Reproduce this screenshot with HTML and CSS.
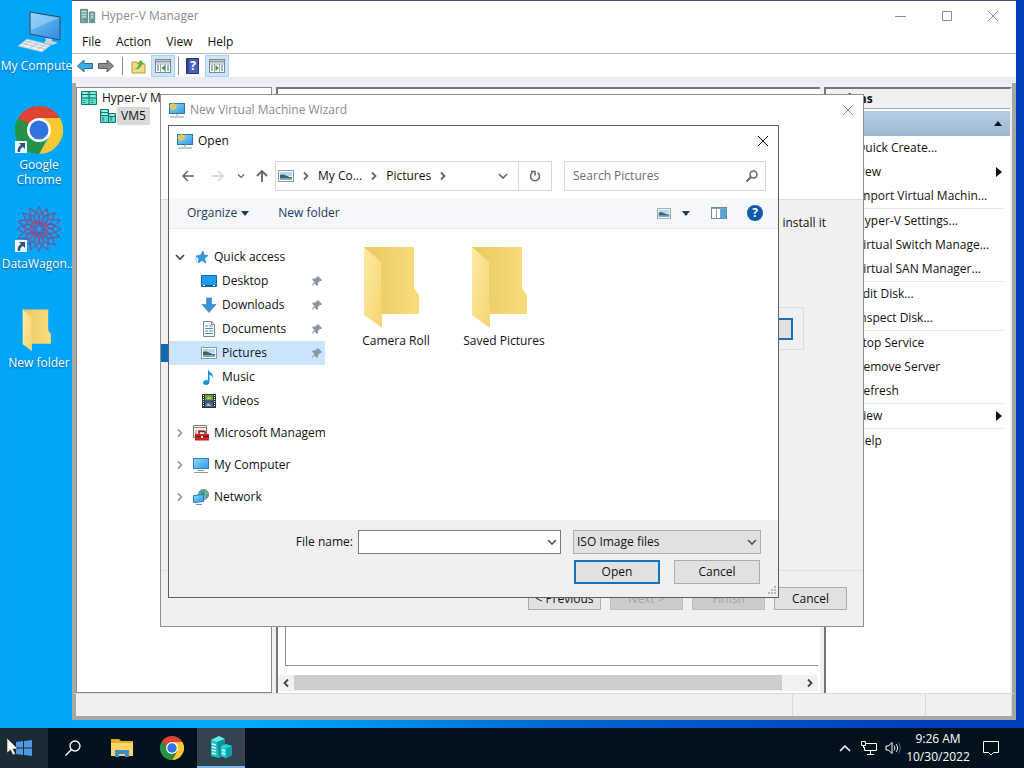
FILE: index.html
```html
<!DOCTYPE html>
<html lang="en">
<head>
    <meta charset="UTF-8">
    <meta name="viewport" content="width=device-width, initial-scale=1.0">
    <title>Hyper-V Manager</title>
    <link rel="stylesheet" href="styles.css">
</head>
<body>
    <!-- Shared icons -->
    <svg class="sprite" aria-hidden="true">
        <defs>
            <linearGradient id="screen-fill" x1="0" y1="0" x2="1" y2="1">
                <stop offset="0" stop-color="#8fd8fb"/>
                <stop offset="1" stop-color="#2e9be6"/>
            </linearGradient>
            <linearGradient id="desk-fill" x1="0" y1="0" x2="1" y2="1">
                <stop offset="0" stop-color="#7cc6f5"/>
                <stop offset="1" stop-color="#2a8be0"/>
            </linearGradient>
            <linearGradient id="folder-back" x1="0" y1="0" x2="1" y2="0">
                <stop offset="0" stop-color="#e9c95e"/>
                <stop offset="1" stop-color="#fbdb7d"/>
            </linearGradient>
            <linearGradient id="folder-front" x1="0" y1="0" x2="1" y2="1">
                <stop offset="0" stop-color="#ffeaa4"/>
                <stop offset="1" stop-color="#f5d572"/>
            </linearGradient>
        </defs>
        <symbol id="i-close" viewBox="0 0 12 12"><path d="M1 1l10 10M11 1L1 11" fill="none" stroke="currentColor"/></symbol>
        <symbol id="i-right" viewBox="0 0 8 10"><path d="M2 1.5L5.5 5 2 8.5" fill="none" stroke="currentColor" stroke-width="1.8"/></symbol>
        <symbol id="i-left" viewBox="0 0 8 10"><path d="M6 1.5L2.5 5 6 8.5" fill="none" stroke="currentColor" stroke-width="1.8"/></symbol>
        <symbol id="i-down" viewBox="0 0 10 8"><path d="M1 2l4 4 4-4" fill="none" stroke="currentColor" stroke-width="1.6"/></symbol>
        <symbol id="i-tri" viewBox="0 0 8 5"><path d="M0 0h8L4 5z" fill="currentColor"/></symbol>
        <symbol id="i-tri-right" viewBox="0 0 6 10"><path d="M0 0l6 5-6 5z" fill="currentColor"/></symbol>
        <symbol id="i-folder" viewBox="0 0 58 82">
            <path d="M1 1h50v41l5 7v19H18z" fill="url(#folder-back)"/>
            <path d="M1 1l17 15v42l1 2v22L1 69z" fill="url(#folder-front)"/>
        </symbol>
        <symbol id="i-wizard" viewBox="0 0 16 16">
            <rect x=".5" y="1.5" width="15" height="10" fill="url(#screen-fill)" stroke="#2879b0"/>
            <path d="M8 12v2M1 15h14" stroke="#8b969c"/>
            <circle cx="4.5" cy="4.5" r="3" fill="#f4d24f"/>
            <path d="M4.5 0v9M0 4.5h9M1.5 1.5l6 6M7.5 1.5l-6 6" stroke="#d7c45c" stroke-width=".7"/>
        </symbol>
        <symbol id="i-picture" viewBox="0 0 16 12">
            <rect x=".5" y=".5" width="15" height="11" fill="#fff" stroke="#8a9aa5"/>
            <path d="M2 2h12v4H2z" fill="#b5d8ee"/>
            <path d="M2 5c3-1 5 0 7 1s4 1 5 1v2H2z" fill="#3e6473"/>
            <path d="M2 8h12v2H2z" fill="#7fa9b9"/>
        </symbol>
        <symbol id="i-chrome" viewBox="0 0 48 48">
            <path d="M24 24V12h20.8A24 24 0 0 1 24 48l10.4-18z" fill="#fcc934"/>
            <path d="M24 48A24 24 0 0 1 3.2 12l10.4 18L24 36l7-2z" fill="#249346"/>
            <path d="M3.2 12A24 24 0 0 1 44.8 12H24L13.6 30z" fill="#df4334"/>
            <path d="M3.2 12l10.4 18 7-8z" fill="#249346"/>
            <circle cx="24" cy="24" r="12" fill="#fff"/>
            <circle cx="24" cy="24" r="9.5" fill="#3373df"/>
        </symbol>
        <symbol id="i-shortcut" viewBox="0 0 12 12">
            <rect width="12" height="12" fill="#eef5fb"/>
            <path d="M4 2h6v6L8 6c-2 1-3 2-3 5H3c-1-3 0-5 3-7z" fill="#2d5488"/>
        </symbol>
        <symbol id="i-server" viewBox="0 0 16 16">
            <path d="M.5 1.5h8v13h-8zM8.5 5.5h7v9h-7z" fill="#5fdccd" stroke="#16766e"/>
            <path d="M1 4.5h7M1 7.5h7M9 8.5h6" stroke="#16766e"/>
            <path d="M2 3h5M2 6h5M10 7h4" stroke="#d4fff9"/>
            <path d="M2 10h2M2 12h2M10 10h2M10 12h2" stroke="#16766e"/>
        </symbol>
        <symbol id="i-rack" viewBox="0 0 16 16">
            <path d="M.5 1.5h15v13H.5z" fill="#5fdccd" stroke="#16766e"/>
            <path d="M8 1v14M1 4.5h14M1 8h14" stroke="#16766e"/>
            <path d="M2 3h4M10 3h4M2 6h4M10 6h4" stroke="#c8fff7"/>
            <path d="M2 10.500h2M10 10.500h2M2 12.500h2M10 12.500h2" stroke="#2b8f87"/>
        </symbol>
        <symbol id="i-pin" viewBox="0 0 12 12"><path d="M7 1l4 4-1 1-1 0-2 2 0 2-1 1-2.500-2.500L1 11l0-1 2.500-3L1 4.500l1-1h2l2.500-2z" fill="#8b98a3"/></symbol>
        <symbol id="i-panel" viewBox="0 0 16 14">
            <rect x=".5" y=".5" width="15" height="13" fill="#fff" stroke="#7b8793"/>
            <path d="M1 2.500h14" stroke="#8a97a3" stroke-width="2"/>
            <path d="M1 5h14M5.500 5v8M10.500 5v8" stroke="#9aa6b0"/>
            <path d="M2 7h2M2 9h2M2 11h2M12 7h2M12 9h2M12 11h2" stroke="#44617d"/>
        </symbol>
    </svg>

    <main class="desktop">
        <div class="desktop-icons">
            <button class="shortcut">
                <svg class="shortcut-icon" viewBox="0 0 48 48">
                    <path d="M15 5l30 5v23l-30-6z" fill="url(#desk-fill)" stroke="#2c4e6b"/>
                    <path d="M16 6l28 5-28 12z" fill="#c4e8fb" opacity=".4"/>
                    <path d="M30 31l7 1v2l6 2-6 2-8-2 2-3z" fill="#c7d5df"/>
                    <path d="M12 32l24 6-9 7-24-6z" fill="#e9eff3" stroke="#a3b4c0" stroke-width=".7"/>
                    <path d="M10 34l23 6M7 36l23 6M17 33l-9 6M24 35l-9 6M31 37l-9 6" stroke="#a8b7c2" stroke-width=".7"/>
                </svg>
                <span>My Computer</span>
            </button>
            <button class="shortcut">
                <svg class="shortcut-icon" viewBox="0 0 48 48">
                    <use href="#i-chrome"/>
                    <use href="#i-shortcut" y="35" width="12" height="12"/>
                </svg>
                <span>Google<br>Chrome</span>
            </button>
            <button class="shortcut">
                <svg class="shortcut-icon" viewBox="0 0 48 48">
                    <g fill="none" stroke="#6a5c9e" stroke-width="1.3">
                        <g id="petals">
                            <path d="M24 2l5 10-5 9-5-9zM24 46l5-10-5-9-5 9zM2 24l10-5 9 5-9 5zM46 24l-10-5-9 5 9 5z"/>
                            <path d="M8 8l11 3 3 10-10-3zM40 8l-11 3-3 10 10-3zM8 40l11-3 3-10-10 3zM40 40l-11-3-3-10 10 3z"/>
                        </g>
                        <use href="#petals" transform="rotate(22 24 24)"/>
                        <circle cx="24" cy="24" r="14" stroke="#8d558f" stroke-dasharray="3 2"/>
                        <circle cx="24" cy="24" r="8" stroke="#b04a72" stroke-width="2" stroke-dasharray="3 2"/>
                    </g>
                    <use href="#i-shortcut" y="35" width="12" height="12"/>
                </svg>
                <span>DataWagon...</span>
            </button>
            <button class="shortcut">
                <svg class="shortcut-icon" viewBox="0 0 48 48"><use href="#i-folder" x="6" y="5" width="32" height="42"/></svg>
                <span>New folder</span>
            </button>
        </div>

        <!-- Hyper-V Manager -->
        <section class="window manager">
            <header class="titlebar">
                <svg width="16" height="16" viewBox="0 0 18 16">
                    <path d="M.5.500h8v15h-8z" fill="#7fa9a4" stroke="#54807b"/>
                    <path d="M10.500 3.500h6v12h-6z" fill="#7fa9a4" stroke="#54807b"/>
                    <path d="M2 3h5M2 6h5M2 9h5M12 6h3M12 9h3" stroke="#dff3f0"/>
                    <path d="M5 12h2M13 13h2" stroke="#3f7c4b" stroke-width="2"/>
                </svg>
                <span class="title">Hyper-V Manager</span>
                <div class="window-buttons">
                    <button aria-label="Minimize"><svg width="12" height="12"><path d="M0 6.500h11" stroke="currentColor"/></svg></button>
                    <button aria-label="Maximize"><svg width="12" height="12"><path d="M1.500 1.500h9v9h-9z" fill="none" stroke="currentColor"/></svg></button>
                    <button aria-label="Close"><svg width="12" height="12"><use href="#i-close"/></svg></button>
                </div>
            </header>
            <nav class="menubar">
                <button>File</button>
                <button>Action</button>
                <button>View</button>
                <button>Help</button>
            </nav>
            <div class="toolbar">
                <button aria-label="Back"><svg width="16" height="14" viewBox="0 0 16 14"><path d="M.5 7L7 1v3.500h8.500v5H7V13z" fill="#3fa9e2" stroke="#2c6a97"/></svg></button>
                <button aria-label="Forward"><svg width="16" height="14" viewBox="0 0 16 14"><path d="M15.500 7L9 1v3.500H.5v5H9V13z" fill="#8b8b8b" stroke="#5e5e5e"/></svg></button>
                <span class="divider"></span>
                <button aria-label="Up one level">
                    <svg width="16" height="16" viewBox="0 0 16 16">
                        <path d="M1 4h5l1 2h7v9H1z" fill="#f0dc86" stroke="#b89b47"/>
                        <path d="M3 11c2 0 4-2 5-5l-2 0 4-4 3 4-2 0c-1 4-4 6-8 5z" fill="#56b33b"/>
                    </svg>
                </button>
                <button class="pressed" aria-label="Show console tree"><svg width="16" height="14" viewBox="0 0 16 14"><use href="#i-panel"/><path d="M10 6v6L6.500 9z" fill="#3b9a35"/></svg></button>
                <span class="divider"></span>
                <button aria-label="Help">
                    <svg width="14" height="16" viewBox="0 0 14 16">
                        <path d="M.5.500h12v15H.5z" fill="#4660bb" stroke="#27346f"/>
                        <path d="M2 1v14" stroke="#23306b"/>
                        <text x="7" y="12" class="help-mark">?</text>
                    </svg>
                </button>
                <button class="pressed" aria-label="Show action pane"><svg width="16" height="14" viewBox="0 0 16 14"><use href="#i-panel"/><path d="M6.500 6v6L10 9z" fill="#3b9a35"/></svg></button>
            </div>
            <div class="panes">
                <div class="pane tree">
                    <div class="tree-row"><svg width="16" height="16"><use href="#i-rack"/></svg><span>Hyper-V Manager</span></div>
                    <div class="tree-row child"><svg width="16" height="16"><use href="#i-server"/></svg><span class="current">VM5</span></div>
                </div>
                <div class="pane details">
                    <div class="details-box"></div>
                    <div class="scrollbar">
                        <button aria-label="Scroll left"><svg width="8" height="10"><use href="#i-left"/></svg></button>
                        <div class="track"><div class="thumb"></div></div>
                        <button aria-label="Scroll right"><svg width="8" height="10"><use href="#i-right"/></svg></button>
                    </div>
                </div>
                <aside class="pane actions">
                    <h2>Actions</h2>
                    <div class="actions-group"><span>VM5</span><svg class="flip" width="10" height="5"><use href="#i-tri"/></svg></div>
                    <button>Quick Create...</button>
                    <button>New<svg width="6" height="10"><use href="#i-tri-right"/></svg></button>
                    <button>Import Virtual Machin...</button>
                    <hr>
                    <button>Hyper-V Settings...</button>
                    <button>Virtual Switch Manage...</button>
                    <button>Virtual SAN Manager...</button>
                    <hr>
                    <button>Edit Disk...</button>
                    <button>Inspect Disk...</button>
                    <hr>
                    <button>Stop Service</button>
                    <button>Remove Server</button>
                    <button>Refresh</button>
                    <hr>
                    <button>View<svg width="6" height="10"><use href="#i-tri-right"/></svg></button>
                    <hr>
                    <button>Help</button>
                </aside>
            </div>
            <footer class="statusbar"><span></span><span></span><span></span></footer>
        </section>

        <!-- New Virtual Machine Wizard -->
        <section class="window wizard">
            <header class="titlebar">
                <svg width="16" height="16"><use href="#i-wizard"/></svg>
                <span class="title">New Virtual Machine Wizard</span>
                <button class="close" aria-label="Close"><svg width="12" height="12"><use href="#i-close"/></svg></button>
            </header>
            <div class="wizard-banner"></div>
            <div class="wizard-body">
                <div class="wizard-steps"><span class="step"></span></div>
                <div class="wizard-page">
                    <p>can install it</p>
                    <div class="group"><button aria-label="Browse"></button></div>
                </div>
            </div>
            <footer class="wizard-footer">
                <button class="btn">&lt; Previous</button>
                <button class="btn" disabled>Next &gt;</button>
                <button class="btn" disabled>Finish</button>
                <button class="btn">Cancel</button>
            </footer>
        </section>

        <!-- File picker -->
        <section class="window picker">
            <header class="titlebar">
                <svg width="16" height="16"><use href="#i-wizard"/></svg>
                <span class="title">Open</span>
                <button class="close" aria-label="Close"><svg width="12" height="12"><use href="#i-close"/></svg></button>
            </header>
            <div class="location">
                <div class="history">
                    <button aria-label="Back"><svg width="14" height="12"><path d="M13 6H2M7 1L2 6l5 5" fill="none" stroke="#666" stroke-width="1.500"/></svg></button>
                    <button aria-label="Forward"><svg width="14" height="12"><path d="M1 6h11M7 1l5 5-5 5" fill="none" stroke="#d3d3d3" stroke-width="1.500"/></svg></button>
                    <button class="recent" aria-label="Recent locations"><svg width="8" height="6"><use href="#i-down"/></svg></button>
                    <button class="up" aria-label="Up"><svg width="12" height="14"><path d="M6 13V2M1 7l5-5 5 5" fill="none" stroke="#666" stroke-width="1.800"/></svg></button>
                </div>
                <div class="address">
                    <svg width="16" height="12"><use href="#i-picture"/></svg>
                    <svg class="crumb-arrow" width="8" height="10"><use href="#i-right"/></svg>
                    <button>My Co...</button>
                    <svg class="crumb-arrow" width="8" height="10"><use href="#i-right"/></svg>
                    <button>Pictures</button>
                    <svg class="crumb-arrow" width="8" height="10"><use href="#i-right"/></svg>
                    <button class="previous" aria-label="Previous locations"><svg width="10" height="8"><use href="#i-down"/></svg></button>
                    <button class="reload" aria-label="Refresh">
                        <svg width="12" height="12"><path d="M8.500 2.500A4.500 4.500 0 1 1 3.500 2.500M2 1.500h4V5.500" fill="none" stroke="currentColor" stroke-width="1.500"/></svg>
                    </button>
                </div>
                <div class="search">
                    <input type="text" placeholder="Search Pictures" aria-label="Search Pictures">
                    <svg width="12" height="12"><circle cx="7.500" cy="4.500" r="3.500" fill="none" stroke="currentColor" stroke-width="1.500"/><path d="M5 7L.5 11.500" stroke="currentColor" stroke-width="2"/></svg>
                </div>
            </div>
            <div class="commands">
                <button>Organize <svg width="8" height="5"><use href="#i-tri"/></svg></button>
                <button>New folder</button>
                <div class="view-tools">
                    <button aria-label="Change view"><svg width="14" height="11"><use href="#i-picture"/></svg></button>
                    <button aria-label="More views"><svg width="8" height="5"><use href="#i-tri"/></svg></button>
                    <button class="preview" aria-label="Preview pane">
                        <svg width="16" height="12"><rect x=".5" y=".5" width="15" height="11" fill="#fff" stroke="#788995"/><path d="M10 1h5v10h-5z" fill="#4ba6e4"/><path d="M5.500 1v10M9.500 1v10M1 1.500h14" stroke="#8aa3b5"/></svg>
                    </button>
                    <button aria-label="Get help"><svg width="16" height="16"><circle cx="8" cy="8" r="8" fill="#0c5cab"/><text x="8" y="12" class="help-mark">?</text></svg></button>
                </div>
            </div>
            <div class="browser">
                <nav class="places">
                    <button class="place root">
                        <svg class="twisty open" width="10" height="8"><use href="#i-down"/></svg>
                        <svg width="16" height="16"><path d="M10 2l1 4 4 .5-3.500 3L13 14l-4-2.500L5 14l1-4.500L3 7l4.500-.8z" fill="#2b9be3" stroke="#2278b4" stroke-width=".6"/><path d="M2 9h3M2 11h2M3 13h1" stroke="#7fc1ec"/></svg>
                        <span>Quick access</span>
                    </button>
                    <button class="place">
                        <svg width="16" height="16"><path d="M.5 2.500h15v11H.5z" fill="#1f9cf0" stroke="#126ba9"/><path d="M1 12.500h14" stroke="#0d5d96"/><path d="M2 12.500h2M12 12.500h2" stroke="#fff"/></svg>
                        <span>Desktop</span><svg class="pin" width="12" height="12"><use href="#i-pin"/></svg>
                    </button>
                    <button class="place">
                        <svg width="16" height="16"><path d="M5.500 1h5v6.500H15L8 15.500 1 7.500h4.500z" fill="#3b92d8" stroke="#2f7bb8" stroke-width=".6"/></svg>
                        <span>Downloads</span><svg class="pin" width="12" height="12"><use href="#i-pin"/></svg>
                    </button>
                    <button class="place">
                        <svg width="16" height="16"><path d="M2.500.5h8l3 3v12h-11z" fill="#fff" stroke="#7c8b95"/><path d="M10.500.5v3h3" fill="none" stroke="#7c8b95"/><path d="M4 5h3M8 5h4M4 7.500h8M4 10h3M8 10h4M4 12.500h8" stroke="#4c92bf"/></svg>
                        <span>Documents</span><svg class="pin" width="12" height="12"><use href="#i-pin"/></svg>
                    </button>
                    <button class="place selected">
                        <svg width="16" height="12"><use href="#i-picture"/></svg>
                        <span>Pictures</span><svg class="pin" width="12" height="12"><use href="#i-pin"/></svg>
                    </button>
                    <button class="place">
                        <svg width="16" height="16"><path d="M7 0c1 4 6 4 5 9-.5-2-2-3-3.500-3v7c0 4-6.500 3.500-6.500 1 0-2.500 3-3.500 5-2.500z" fill="#1795dc"/></svg>
                        <span>Music</span>
                    </button>
                    <button class="place">
                        <svg width="16" height="16"><path d="M1 1h14v14H1z" fill="#30343a"/><path d="M4 2h8v5.500H4z" fill="#6f9d43"/><path d="M4 8.500h8V14H4z" fill="#3d5fc4"/><path d="M5 6l3-3 3 3zM5 13l2-3 4 3z" fill="#b9c84c"/><path d="M2.500 2v12M13.500 2v12" stroke="#fff" stroke-dasharray="1 1"/></svg>
                        <span>Videos</span>
                    </button>
                    <button class="place root">
                        <svg class="twisty" width="8" height="10"><use href="#i-right"/></svg>
                        <svg width="16" height="16"><path d="M.5.5h13v12H.5z" fill="#f2f0e8" stroke="#807d75"/><path d="M1 2.500h12M3 5v6M5 5.500h6" stroke="#8f8c83"/><path d="M2 9h14v6.500H2z" fill="#c9242f"/><path d="M6 9V6.500h6V9" fill="none" stroke="#981a23" stroke-width="1.500"/><path d="M2 11.500h14" stroke="#7b121a"/><path d="M8 11h2v2H8z" fill="#eee"/></svg>
                        <span>Microsoft Management</span>
                    </button>
                    <button class="place root">
                        <svg class="twisty" width="8" height="10"><use href="#i-right"/></svg>
                        <svg width="16" height="16"><rect x=".5" y="1.500" width="15" height="10" fill="url(#screen-fill)" stroke="#3483b4"/><path d="M5 13.500h6M1 15.500h14" stroke="#849aa6"/></svg>
                        <span>My Computer</span>
                    </button>
                    <button class="place root">
                        <svg class="twisty" width="8" height="10"><use href="#i-right"/></svg>
                        <svg width="16" height="16"><circle cx="10.500" cy="5.500" r="5" fill="#7cb7bd" stroke="#47878f"/><path d="M7 3l4-2 1 4-2 4zM13 5l2 1-2 3z" fill="#4f9960"/><path d="M.5 6.500l10-1v7l-10 1z" fill="url(#screen-fill)" stroke="#2678b3"/><path d="M3 15.500h6" stroke="#6b92aa"/></svg>
                        <span>Network</span>
                    </button>
                </nav>
                <div class="files">
                    <button class="file"><svg width="58" height="82"><use href="#i-folder"/></svg><span>Camera Roll</span></button>
                    <button class="file"><svg width="58" height="82"><use href="#i-folder"/></svg><span>Saved Pictures</span></button>
                </div>
            </div>
            <footer class="picker-footer">
                <div class="fields">
                    <label for="file-name">File name:</label>
                    <div class="combo">
                        <input id="file-name" type="text">
                        <svg width="10" height="8"><use href="#i-down"/></svg>
                    </div>
                    <div class="combo filter">
                        <select aria-label="File type"><option>ISO Image files</option></select>
                        <svg width="10" height="8"><use href="#i-down"/></svg>
                    </div>
                </div>
                <div class="confirm">
                    <button class="btn default">Open</button>
                    <button class="btn">Cancel</button>
                </div>
                <svg class="grip" width="10" height="10"><path d="M7 1h2M4 4h2M7 4h2M1 7h2M4 7h2M7 7h2" stroke="#b8b8b8" stroke-width="2"/></svg>
            </footer>
        </section>
    </main>

    <footer class="taskbar">
        <button class="start" aria-label="Start">
            <svg width="34" height="22">
                <path d="M9 5l7-1v6.500H9zM17 4l8-1v7.500h-8zM9 11.500h7V18l-7-1zM17 11.500h8V19l-8-1z" fill="#4f9ade"/>
                <!-- mouse pointer -->
                <path d="M0 1v15l3.500-3 2.500 5 2.500-1-2.500-5h5z" fill="#fff" stroke="#222" stroke-width=".6"/>
            </svg>
        </button>
        <button class="find" aria-label="Search"><svg width="18" height="18"><circle cx="11" cy="7" r="5" fill="none" stroke="#fff" stroke-width="1.300"/><path d="M7.500 10.500L1.500 16.500" stroke="#fff" stroke-width="1.500"/></svg></button>
        <button class="pinned" aria-label="File Explorer"><svg width="22" height="18"><path d="M0 0h8l2 2h12v4H0z" fill="#e5a92f"/><path d="M0 4h22v13H0z" fill="#fbd667"/><path d="M4 11h14v7h-4v-3H8v3H4z" fill="#3e8fc6"/></svg></button>
        <button class="pinned" aria-label="Google Chrome"><svg width="24" height="24"><use href="#i-chrome"/></svg></button>
        <button class="running" aria-label="Hyper-V Manager">
            <svg width="24" height="24">
                <path d="M2 5l8-4 6 3v15l-6 4-8-2z" fill="#1fbdc4"/>
                <path d="M2 5l8-4 6 3-8 3z" fill="#66e9e4"/>
                <path d="M8 7l8-3v15l-6 4z" fill="#0e929c"/>
                <path d="M12 11l5-2 6 2v9l-6 3-5-2z" fill="#2bd2d4"/>
                <path d="M17 13l6-2v9l-6 3z" fill="#0ba2ab"/>
                <path d="M3 9l4 1M3 12l4 1M3 15l4 1M3 18l4 1M13 15l3 1M13 18l3 1" stroke="#d8ffff" stroke-width="1.500"/>
            </svg>
        </button>
        <div class="tray">
            <button aria-label="Show hidden icons"><svg width="12" height="8"><path d="M1 7l5-5 5 5" fill="none" stroke="#fff" stroke-width="1.500"/></svg></button>
            <button aria-label="Network"><svg width="16" height="14"><path d="M5 2.500h10.500v7H3.500V6M9.500 10v3M6 13.500h7" fill="none" stroke="#fff"/><path d="M.5.5h4v4h-4zM2.500 4v3" fill="none" stroke="#fff"/></svg></button>
            <button aria-label="Volume"><svg width="16" height="14"><path d="M1 5h2.500L7 1.500v11L3.500 9H1z" fill="none" stroke="#fff"/><path d="M9 4.500c1 1.500 1 3.500 0 5M11 3c2 2 2 6 0 8" fill="none" stroke="#fff"/><path d="M13 1.500c3 3 3 8 0 11" fill="none" stroke="#64717c"/></svg></button>
            <button class="clock"><span>9:26 AM</span><span>10/30/2022</span></button>
            <button class="notices" aria-label="Notifications"><svg width="16" height="16"><path d="M.5 1.500h15v11h-5L8 15l-2.500-2.500h-5z" fill="none" stroke="#fff"/></svg></button>
        </div>
    </footer>
</body>
</html>
```
FILE: styles.css
```css
* {
    box-sizing: border-box;
}
body {
    margin: 0;
    height: 100vh;
    display: flex;
    flex-direction: column;
    overflow: hidden;
    font-family: "Open Sans", "Noto Sans", sans-serif;
    font-size: 12px;
    line-height: 16px;
    color: #111;
}
button,
input,
select {
    font: inherit;
    color: inherit;
    margin: 0;
    padding: 0;
    border: none;
    background: none;
}
button {
    display: flex;
    align-items: center;
    justify-content: center;
    white-space: nowrap;
}
svg {
    flex: none;
    display: block;
}
.sprite {
    position: absolute;
    width: 0;
    height: 0;
}
.help-mark {
    fill: #fff;
    font-size: 12px;
    font-weight: bold;
    text-anchor: middle;
}

/* Desktop */
.desktop {
    position: relative;
    flex: 1;
    min-height: 0;
    background: linear-gradient(90deg, #02a5f8 0%, #00acff 24%, #0067d2 55%, #0040bb 90%);
}
.desktop-icons {
    width: 78px;
    padding-top: 7px;
    display: grid;
    grid-auto-rows: 99px;
}
.shortcut {
    flex-direction: column;
    justify-content: flex-start;
    gap: 3px;
    line-height: 15px;
    color: #fff;
    text-shadow: 0 1px 2px rgba(0, 40, 90, 0.6);
}
.shortcut-icon {
    width: 48px;
    height: 48px;
}

/* Windows */
.window {
    position: absolute;
    display: flex;
    flex-direction: column;
    background: #fff;
}
.titlebar {
    display: flex;
    align-items: center;
    height: 30px;
    padding-left: 8px;
    gap: 5px;
    color: #8c8c8c;
}
.title {
    flex: 1;
}
.close {
    width: 30px;
    height: 30px;
}
.btn {
    width: 73px;
    height: 23px;
    background: #e1e1e1;
    border: 1px solid #adadad;
}
.btn:disabled {
    background: #ccc;
    border-color: #bfbfbf;
    color: #a3a3a3;
}
.btn.default {
    border: 2px solid #1672b8;
}

/* Manager window */
.manager {
    inset: 0 8px 8px 72px;
    border-top: 1px solid #3d5878;
}
.window-buttons {
    display: flex;
}
.window-buttons button {
    width: 46px;
    height: 30px;
}
.menubar {
    display: flex;
    gap: 15px;
    height: 23px;
    padding-left: 10px;
    border-bottom: 1px solid #b3bcc8;
}
.toolbar {
    display: flex;
    align-items: center;
    gap: 3px;
    height: 29px;
    padding-left: 4px;
    border-bottom: 6px solid #e9edf2;
}
.toolbar button {
    width: 18px;
    height: 22px;
}
.toolbar .pressed {
    width: 24px;
    background: #cde6f7;
    border: 1px solid #a9d3ee;
}
.toolbar .divider {
    width: 1px;
    height: 18px;
    margin: 0 4px;
    background: #8b8b8b;
}
.toolbar .pressed + .divider {
    margin: 0 2px 0 0;
}
.panes {
    flex: 1;
    min-height: 0;
    display: grid;
    grid-template-columns: 196px 1fr 188px;
    gap: 4px;
    padding-top: 4px;
    background: #f0f0f0;
    border: solid #a6a6a6;
    border-width: 0 4px;
}
.pane {
    background: #fff;
    border: 1px solid #8a8a8a;
    overflow: hidden;
}
.tree {
    padding-top: 1px;
}
.tree-row {
    display: flex;
    align-items: center;
    gap: 5px;
    height: 18px;
    padding-left: 4px;
    white-space: nowrap;
}
.tree-row.child {
    padding-left: 23px;
    gap: 1px;
}
.current {
    padding: 1px 4px;
    background: #d9d9d9;
}
.details,
.actions {
    border: solid #777;
    border-width: 2px 0 0 2px;
}
.details {
    display: flex;
    flex-direction: column;
    padding: 0 2px 2px 0;
}
.details-box {
    flex: 1;
    margin: 6px 0 9px 7px;
    border: 1px solid #909090;
    border-right: none;
}
.scrollbar {
    display: flex;
    height: 16px;
    background: #f1f1f1;
    color: #444;
}
.scrollbar button {
    width: 16px;
}
.track {
    flex: 1;
}
.thumb {
    width: 96%;
    height: 15px;
    background: #cdcdcd;
}
.actions {
    border-right: 2px solid #eee;
}
.actions h2 {
    margin: 0;
    padding: 2px;
    height: 20px;
    font-size: 12px;
    line-height: 16px;
    background: #f0f0f0;
    border-bottom: 1px solid #98a8b8;
}
.actions-group {
    display: flex;
    align-items: center;
    justify-content: space-between;
    height: 25px;
    margin-top: 2px;
    padding: 0 7px 0 10px;
    background: linear-gradient(#b9cee4, #9cb6d2);
}
.flip {
    transform: rotate(180deg);
}
.actions button {
    justify-content: space-between;
    width: 100%;
    height: 24px;
    padding: 0 8px 0 30px;
}
.actions hr {
    margin: 0 6px;
    border: none;
    border-top: 1px solid #e8e8e8;
}
.statusbar {
    display: grid;
    grid-template-columns: 1fr 133px 86px;
    height: 27px;
    background: #f0f0f0;
    border: 4px solid #a6a6a6;
    border-top: 1px solid #dcdcdc;
}
.statusbar span {
    border-right: 1px solid #d9d9d9;
}

/* Wizard window */
.wizard {
    left: 160px;
    top: 94px;
    width: 704px;
    border: 1px solid #8d9096;
    background: #f0f0f0;
}
.wizard .titlebar,
.wizard-banner {
    background: #fff;
}
.wizard-banner {
    height: 75px;
    border-bottom: 1px solid #dedede;
}
.wizard-body {
    display: grid;
    grid-template-columns: 160px 1fr;
    height: 370px;
}
.wizard-steps {
    padding-top: 144px;
}
.step {
    display: block;
    height: 18px;
    background: #0869ad;
}
.wizard-page {
    padding: 15px 37px 0 0;
    text-align: right;
}
.wizard-page p {
    margin: 0;
}
.group {
    display: flex;
    justify-content: flex-end;
    align-items: center;
    height: 43px;
    margin: 76px 22px 0 0;
    padding-right: 10px;
    border: 1px solid #dcdcdc;
}
.group button {
    width: 73px;
    height: 22px;
    background: #e1e1e1;
    border: 2px solid #1672b8;
}
.wizard-footer {
    display: flex;
    justify-content: flex-end;
    gap: 9px;
    padding: 16px;
    border-top: 1px solid #dfdfdf;
}

/* File picker */
.picker {
    left: 168px;
    top: 125px;
    width: 611px;
    border: 1px solid #5f5f5f;
}
.picker .titlebar {
    height: 29px;
    color: #111;
}
.location {
    display: flex;
    height: 43px;
    padding: 6px 12px 7px 0;
    color: #666;
}
.history {
    display: flex;
    width: 106px;
    padding-left: 4px;
}
.history button {
    width: 30px;
}
.history .recent {
    width: 16px;
}
.history .up {
    width: 26px;
}
.address {
    display: flex;
    align-items: center;
    width: 277px;
    padding-left: 2px;
    border: 1px solid #d9d9d9;
    color: #111;
}
.crumb-arrow {
    margin: 0 8px;
    color: #666;
}
.address .previous {
    margin-left: auto;
    width: 30px;
    height: 28px;
    color: #666;
}
.address .reload {
    width: 33px;
    height: 28px;
    border-left: 1px solid #d9d9d9;
    color: #666;
}
.search {
    display: flex;
    align-items: center;
    flex: 1;
    min-width: 0;
    margin-left: 12px;
    padding: 0 7px 0 8px;
    border: 1px solid #d9d9d9;
}
.search input {
    flex: 1;
    min-width: 0;
    outline: none;
}
.search input::placeholder {
    color: #6d6d6d;
    opacity: 1;
}
.commands {
    display: flex;
    align-items: center;
    gap: 29px;
    height: 31px;
    padding: 0 15px 0 18px;
    background: #f5f7fa;
    border-bottom: 1px solid #e8ebef;
    color: #1e395b;
}
.commands button {
    gap: 4px;
}
.view-tools {
    display: flex;
    gap: 11px;
    margin-left: auto;
}
.view-tools .preview {
    margin: 0 9px 0 10px;
}
.browser {
    display: grid;
    grid-template-columns: 156px 1fr;
    height: 291px;
}
.places {
    padding-top: 16px;
    overflow: hidden;
}
.place {
    justify-content: flex-start;
    gap: 5px;
    width: 100%;
    height: 24px;
    padding-left: 32px;
}
.place.root {
    padding-left: 6px;
}
.place.root ~ .root {
    margin-top: 8px;
}
.twisty {
    width: 10px;
    margin-right: 3px;
    color: #a0a0a0;
}
.twisty.open {
    color: #444;
}
.place.selected {
    background: #cce5ff;
}
.pin {
    margin: 0 2px 0 auto;
}
.files {
    display: flex;
    align-items: flex-start;
    padding: 17px 0 0 17px;
}
.file {
    flex-direction: column;
    gap: 5px;
    width: 108px;
}
.file svg {
    margin-right: 9px;
}
.picker-footer {
    position: relative;
    padding: 10px 17px 13px;
    background: #f0f0f0;
}
.fields,
.confirm {
    display: flex;
    justify-content: flex-end;
    align-items: center;
}
.combo {
    display: grid;
    align-items: center;
    width: 203px;
    height: 24px;
    margin: 0 12px 0 5px;
    background: #fff;
    border: 1px solid #7a7a7a;
}
.combo > * {
    grid-area: 1 / 1;
}
.combo input,
.combo select {
    width: 100%;
    height: 22px;
    padding: 0 3px;
    appearance: none;
    outline: none;
}
.combo svg {
    justify-self: end;
    margin-right: 3px;
    color: #555;
    pointer-events: none;
}
.combo.filter {
    width: 188px;
    margin: 0;
    background: #e1e1e1;
    border-color: #adadad;
}
.confirm {
    gap: 14px;
    margin: 6px 1px 0 0;
}
.confirm .btn {
    width: 86px;
    height: 24px;
}
.grip {
    position: absolute;
    right: 1px;
    bottom: 1px;
}

/* Taskbar */
.taskbar {
    display: flex;
    height: 40px;
    background: #01121d;
    color: #fff;
}
.taskbar > button {
    width: 48px;
}
.taskbar .start {
    background: #1a2b36;
}
.taskbar .find {
    width: 49px;
}
.taskbar .pinned {
    width: 50px;
}
.taskbar .running {
    background: #33444f;
    border-bottom: 2px solid #76b9ed;
}
.tray {
    display: flex;
    margin-left: auto;
    padding-right: 13px;
}
.tray button {
    width: 24px;
}
.tray .clock {
    flex-direction: column;
    width: 66px;
    line-height: 18px;
}
.tray .notices {
    width: 40px;
}
```
